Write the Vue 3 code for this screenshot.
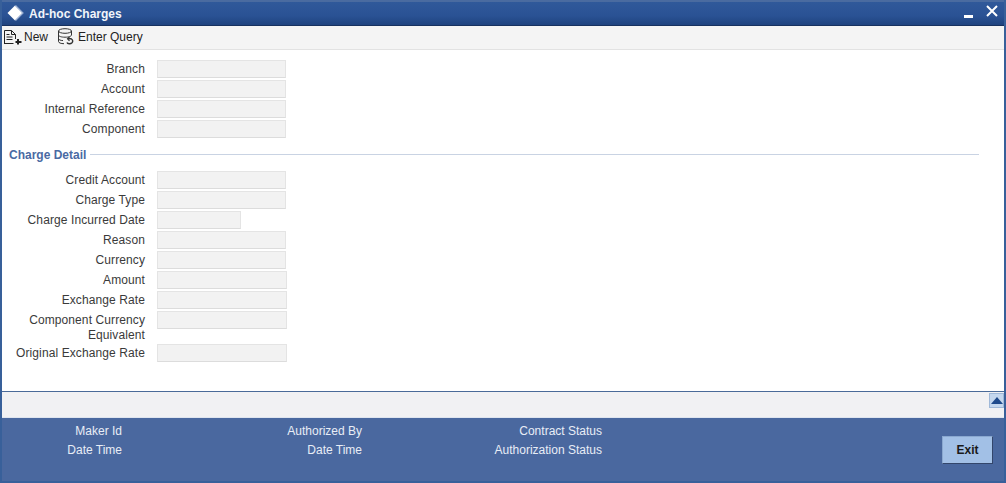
<script setup>
const top = [
  { label: 'Branch' }, { label: 'Account' }, { label: 'Internal Reference' }, { label: 'Component' },
]
const detail = [
  { label: 'Credit Account' }, { label: 'Charge Type' },
  { label: 'Charge Incurred Date', cls: 'date' },
  { label: 'Reason' }, { label: 'Currency' },
  { label: 'Amount', cls: 'wide' }, { label: 'Exchange Rate', cls: 'wide' },
  { label: 'Component Currency Equivalent', cls: 'wide', tall: true },
  { label: 'Original Exchange Rate', cls: 'wide' },
]
const audit = [
  ['Maker Id', 'Authorized By', 'Contract Status'],
  ['Date Time', 'Date Time', 'Authorization Status'],
]
</script>

<template>
  <div class="window">
    <header class="title">
      <svg class="logo" width="18" height="18" viewBox="0 0 18 18"><path d="M9 1.500l7.500 7.500-7.500 7.500L1.500 9z" fill="#fff"/><path d="M9.500 1.500L17 9l-7.500 7.500" fill="none" stroke="#9db1d3" stroke-width="1.200"/></svg>
      <span class="title-text">Ad-hoc Charges</span>
      <svg class="min" width="9" height="3" viewBox="0 0 9 3"><rect width="9" height="3" fill="#fff"/></svg>
      <svg class="close" width="12" height="12" viewBox="0 0 12 12"><path d="M1 1l10 10M11 1L1 11" stroke="#fff" stroke-width="2" fill="none"/></svg>
    </header>
    <nav class="toolbar">
      <span class="tool new">
        <svg width="18" height="16" viewBox="0 0 18 16" fill="none" stroke="#222" stroke-width="1">
          <path d="M.5 15V1.500h7l4 4V10"/><path d="M7.500 1.500v4h4"/><path d="M2.500 5.500h3M2.500 8h6M2.500 10.500h6M.5 14.500h9"/>
          <path d="M14 10v5.500M11.500 13h6" stroke-width="2"/>
        </svg>
        New
      </span>
      <span class="tool query">
        <svg width="18" height="17" viewBox="0 0 18 17" fill="none" stroke="#333" stroke-width="1">
          <ellipse cx="8" cy="3" rx="6.500" ry="2.300"/>
          <path d="M1.500 3v10.500c0 1.300 2.500 2.200 5.500 2.200M14.500 3v4M1.500 7c0 1.300 2.900 2.200 6.500 2.200s6.500-.9 6.500-2.200M1.500 10.500c0 1.200 2 2 4.500 2.100"/>
          <path d="M10 14.500c.5 1.500 3.500 1.800 5 .3 1.200-1.300.8-3.300-.8-4H11" stroke-width="1.400"/><path d="M12.500 8.800L10.500 10.800l2 2" stroke-width="1.200"/>
        </svg>
        Enter Query
      </span>
    </nav>
    <main class="body">
      <section class="rows">
        <div v-for="f in top" :key="f.label" class="row">
          <label class="lbl">{{ f.label }}</label>
          <span class="input" />
        </div>
      </section>
      <h2 class="heading"><span>Charge Detail</span></h2>
      <section class="rows">
        <div v-for="f in detail" :key="f.label" class="row" :class="{ tall: f.tall }">
          <label class="lbl">{{ f.label }}</label>
          <span class="input" :class="f.cls" />
        </div>
      </section>
    </main>
    <div class="strip">
      <button class="up"><svg width="12" height="8" viewBox="0 0 12 8"><path d="M6 0l6 7H0z" fill="#1f4a8c"/></svg></button>
    </div>
    <footer class="audit">
      <div class="audit-grid">
        <template v-for="(r, i) in audit" :key="i">
          <span v-for="(t, j) in r" :key="j" class="audit-lbl">{{ t }}</span>
        </template>
      </div>
      <button class="exit">Exit</button>
    </footer>
  </div>
</template>

<style>
html, body { margin: 0; background: #fff; }
</style>

<style scoped>
.window {
  width: 1006px; height: 483px; box-sizing: border-box; overflow: hidden;
  display: flex; flex-direction: column;
  border: 2px solid #38609a; border-top: 0;
  font: 12px "Liberation Sans", Arial, sans-serif; color: #333; letter-spacing: .1px;
  background: #fff;
}
.title {
  flex: none; display: flex; align-items: center;
  background: linear-gradient(#30599a, #2a5294 60%, #1f437f);
  border-top: 2px solid #4a6ba0; border-bottom: 1px solid #17315f;
  margin: 0 -2px; padding: 1px 0 1px 6px; box-sizing: content-box; height: 21px;
  color: #fff;
}
.logo { flex: none; margin-top: -1px; }
.title-text { font-weight: bold; margin-left: 5px; flex: 1; color: #f2f5fa; letter-spacing: 0; }
.min { margin: 5px 13px 0 0; }
.close { margin: -6px 8px 0 0; }
.toolbar {
  height: 24px; flex: none; background: #f4f4f4; border-bottom: 1px solid #e2e2e2;
  display: flex; align-items: center; color: #222; padding: 0 0 2px 2px; box-sizing: border-box; letter-spacing: 0;
}
.tool { display: inline-flex; align-items: center; }
.new svg { margin-right: 2px; }
.new { margin-right: 9px; }
.query svg { margin-right: 3px; }
.body { flex: 1; padding-top: 10px; min-height: 0; }
.rows { display: flex; flex-direction: column; gap: 2px; }
.row { display: flex; height: 18px; line-height: 18px; }
.row.tall { height: 31px; line-height: 15px; }
.lbl { width: 143px; text-align: right; margin-right: 12px; color: #3a3a3a; }
.row.tall .lbl { padding-top: 2px; }
.input {
  width: 129px; height: 18px; box-sizing: border-box; background: #f2f2f2;
  border: 1px solid #e4e4e4; border-bottom-color: #dcdcdc;
}
.input.wide { width: 130px; }
.input.date { width: 84px; }
.heading {
  margin: 9px 25px 8px 7px; font-size: 12px; line-height: 16px; font-weight: bold; color: #4a6aa3; letter-spacing: 0;
  display: flex; align-items: center; gap: 4px;
}
.heading::after { content: ""; flex: 1; height: 1px; margin-top: -1px; background: #c9d3e3; }
.strip {
  height: 27px; flex: none; background: #f1f1f3;
  border-top: 1px solid #4a6a98; border-bottom: 1px solid #dfe5ef;
  display: flex; justify-content: flex-end; align-items: flex-start; box-sizing: border-box; padding-top: 1px;
}
.up {
  width: 15px; height: 15px; padding: 0; margin: 0; display: flex; align-items: center; justify-content: center;
  background: #c4d7ee; border: 1px solid #9fb8d8;
}
.audit {
  flex: none; height: 63px; background: #4a689f; position: relative; display: flex; align-items: flex-start; letter-spacing: 0;
}
.audit-grid {
  display: grid; grid-template-columns: 120px 240px 240px; row-gap: 4px; padding-top: 6px; line-height: 15px;
}
.audit-lbl { text-align: right; color: #e8edf6; }
.exit {
  margin: 18px 0 0 auto; margin-right: 11px; width: 51px; height: 28px; padding: 0;
  background: #a2c0e6; color: #1a1a1a; font: bold 12px "Liberation Sans", Arial, sans-serif;
  border: 1px solid; border-color: #8aa8d0 #33466b #33466b #8aa8d0;
}
</style>
